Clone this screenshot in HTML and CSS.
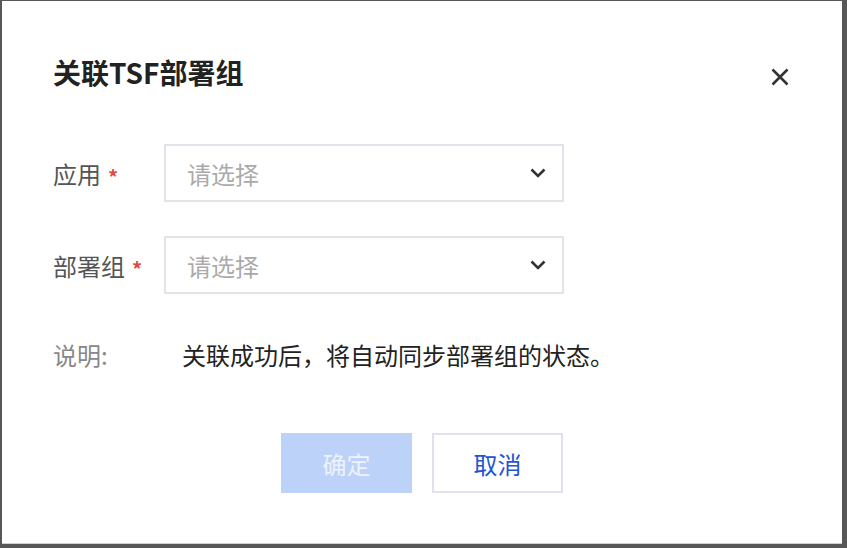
FILE: index.html
```html
<!DOCTYPE html>
<html lang="zh-CN">
<head>
  <meta charset="UTF-8">
  <meta name="viewport" content="width=device-width, initial-scale=1.0">
  <title>关联TSF部署组</title>
  <link rel="stylesheet" href="styles.css">
</head>
<body>
  <div class="modal">
    <div class="modal-header">
      <h3 class="modal-title">关联TSF部署组</h3>
      <button class="close-btn" aria-label="关闭">
        <svg width="18" height="18" viewBox="0 0 18 18">
          <path d="M1.5 1.5 L16.5 16.5 M16.5 1.5 L1.5 16.5" stroke="#333" stroke-width="2.6" fill="none"/>
        </svg>
      </button>
    </div>

    <div class="form-row">
      <label class="form-label">应用<span class="required">*</span></label>
      <div class="select">
        <span class="placeholder">请选择</span>
        <svg class="arrow" width="16" height="10" viewBox="0 0 16 10">
          <polyline points="1.5,1.5 8,8 14.5,1.5" stroke="#333" stroke-width="2.6" fill="none"/>
        </svg>
      </div>
    </div>

    <div class="form-row">
      <label class="form-label">部署组<span class="required">*</span></label>
      <div class="select">
        <span class="placeholder">请选择</span>
        <svg class="arrow" width="16" height="10" viewBox="0 0 16 10">
          <polyline points="1.5,1.5 8,8 14.5,1.5" stroke="#333" stroke-width="2.6" fill="none"/>
        </svg>
      </div>
    </div>

    <div class="desc-row">
      <span class="desc-label">说明:</span>
      <span class="desc-text">关联成功后，将自动同步部署组的状态。</span>
    </div>

    <div class="modal-footer">
      <button class="btn btn-primary" disabled>确定</button>
      <button class="btn btn-default">取消</button>
    </div>
  </div>
</body>
</html>
```

FILE: styles.css
```css
body {
  margin: 0;
  height: 548px;
  overflow: hidden;
  background: #575757;
  font-family: "Noto Sans CJK SC", "Noto Sans", sans-serif;
  font-size: 24px;
}
.modal {
  width: 840px;
  height: 542px;
  margin: 1px 0 0 2px;
  box-sizing: border-box;
  padding: 0 53px 0 51px;
  background: #fff;
  box-shadow: 0 1px 0 #d0d0d0;
}
.modal-header {
  display: flex;
  align-items: center;
  justify-content: space-between;
  height: 40px;
  padding-top: 54px;
}
.modal-title {
  margin: 0 0 7px;
  font-size: 28px;
  font-weight: bold;
  color: #222;
}
.close-btn {
  background: none;
  border: none;
  padding: 0;
  margin-top: 4px;
  width: 18px;
  height: 18px;
  cursor: pointer;
}
.form-row {
  display: flex;
  align-items: center;
  margin-top: 34px;
}
.modal-header + .form-row {
  margin-top: 49px;
}
.form-label {
  width: 111px;
  color: #555;
  display: flex;
  align-items: center;
}
.required {
  color: #e54545;
  font-size: 20px;
  font-weight: bold;
  margin-left: 7px;
  margin-top: 6px;
}
.select {
  width: 400px;
  height: 58px;
  box-sizing: border-box;
  border: 2px solid #e3e4ea;
  display: flex;
  align-items: center;
  justify-content: space-between;
  padding: 0 16px 0 21px;
}
.placeholder {
  color: #aaa;
}
.desc-row {
  display: flex;
  align-items: center;
  height: 34px;
  margin-top: 43px;
}
.desc-label {
  width: 129px;
  color: #888;
}
.desc-text {
  color: #222;
}
.modal-footer {
  display: flex;
  justify-content: center;
  gap: 20px;
  margin-top: 62px;
  padding-left: 2px;
}
.btn {
  width: 131px;
  height: 60px;
  box-sizing: border-box;
  font-family: inherit;
  font-size: 24px;
  border: 2px solid transparent;
  cursor: pointer;
}
.btn-primary {
  background: #bdd2f8;
  border-color: #bdd2f8;
  color: #eef3fd;
}
.btn-default {
  background: #fff;
  border-color: #dfe2ec;
  color: #2453d4;
}
```
